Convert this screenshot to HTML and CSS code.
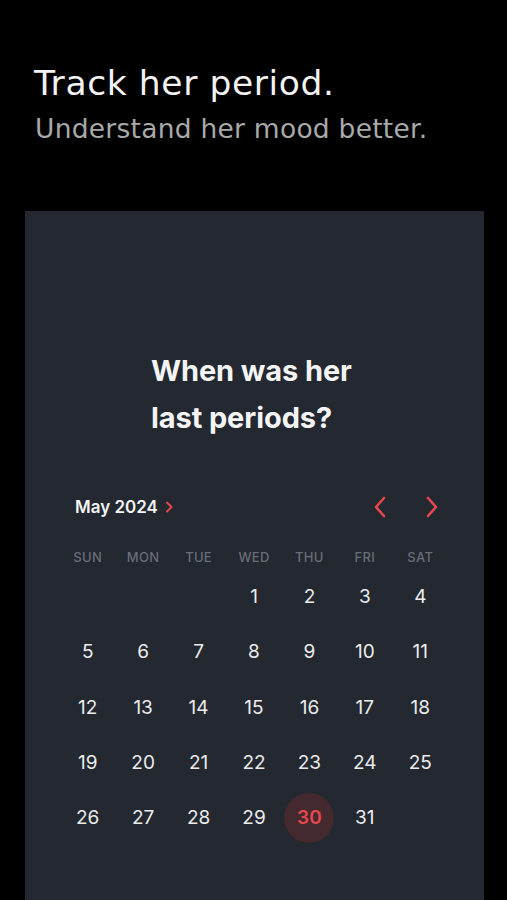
FILE: index.html
```html
<!DOCTYPE html>
<html>
<head>
<meta charset="utf-8">
<link rel="stylesheet" href="styles.css">
</head>
<body>
<header class="intro">
  <h1 class="title">Track her period.</h1>
  <p class="subtitle">Understand her mood better.</p>
</header>
<main class="panel">
  <h2 class="question">When was her<br>last periods?</h2>
  <section class="calendar">
    <div class="month-row">
      <div class="month">May 2024
        <svg class="month-chev" width="9" height="12" viewBox="0 0 9 12"><path d="M2 1.5 L6.5 6 L2 10.5" fill="none" stroke="#e5484d" stroke-width="2" stroke-linecap="round" stroke-linejoin="round"/></svg>
      </div>
      <div class="nav">
        <svg class="nav-btn" width="14" height="22" viewBox="0 0 14 22"><path d="M11 2 L3 11 L11 20" fill="none" stroke="#e5484d" stroke-width="2.6" stroke-linecap="round" stroke-linejoin="round"/></svg>
        <svg class="nav-btn" width="14" height="22" viewBox="0 0 14 22"><path d="M3 2 L11 11 L3 20" fill="none" stroke="#e5484d" stroke-width="2.6" stroke-linecap="round" stroke-linejoin="round"/></svg>
      </div>
    </div>
    <div class="weekdays">
      <span>SUN</span><span>MON</span><span>TUE</span><span>WED</span><span>THU</span><span>FRI</span><span>SAT</span>
    </div>
    <div class="days">
      <span></span><span></span><span></span>
      <span>1</span><span>2</span><span>3</span><span>4</span>
      <span>5</span><span>6</span><span>7</span><span>8</span><span>9</span><span>10</span><span>11</span>
      <span>12</span><span>13</span><span>14</span><span>15</span><span>16</span><span>17</span><span>18</span>
      <span>19</span><span>20</span><span>21</span><span>22</span><span>23</span><span>24</span><span>25</span>
      <span>26</span><span>27</span><span>28</span><span>29</span><span class="selected"><b>30</b></span><span>31</span><span></span>
    </div>
  </section>
</main>
</body>
</html>
```

FILE: styles.css
```css
html, body {
  margin: 0;
  padding: 0;
  background: #000;
  height: 900px;
  overflow: hidden;
}
.intro {
  padding: 63px 0 0 34px;
  height: 211px;
  box-sizing: border-box;
  font-family: "DejaVu Sans", sans-serif;
}
.title {
  margin: 0;
  font-size: 34.5px;
  font-weight: 400;
  line-height: 40px;
  color: #f2f2f2;
  letter-spacing: 0.6px;
}
.subtitle {
  margin: 8px 0 0 1px;
  font-size: 26.5px;
  line-height: 36px;
  color: #a9a9a9;
  letter-spacing: 0.25px;
}
.panel {
  margin: 0 23px 0 25px;
  height: 689px;
  background: #232831;
  padding-top: 136px;
  box-sizing: border-box;
  font-family: Inter, "Liberation Sans", sans-serif;
}
.question {
  margin: 0 0 0 126px;
  font-size: 29px;
  line-height: 47px;
  font-weight: 700;
  color: #f4f4f4;
  letter-spacing: -0.1px;
}
.calendar {
  margin: 51px 0 0 35px;
  width: 388px;
}
.month-row {
  display: flex;
  align-items: center;
  justify-content: space-between;
  height: 30px;
}
.month {
  display: flex;
  align-items: center;
  gap: 7px;
  padding-left: 15px;
  font-size: 17px;
  font-weight: 600;
  color: #f4f4f4;
}
.nav {
  display: flex;
  gap: 38px;
  padding-right: 9px;
}
.nav-btn {
  display: block;
}
.weekdays {
  margin-top: 25px;
  display: grid;
  grid-template-columns: repeat(7, 1fr);
  height: 20px;
  align-items: center;
}
.weekdays span {
  text-align: center;
  font-size: 13px;
  font-weight: 500;
  color: #686e78;
  letter-spacing: 0.3px;
}
.days {
  margin-top: 2px;
  display: grid;
  grid-template-columns: repeat(7, 1fr);
  grid-auto-rows: 55.3px;
}
.days span {
  display: flex;
  align-items: center;
  justify-content: center;
  font-size: 19px;
  color: #ececec;
}
.days .selected b {
  display: flex;
  align-items: center;
  justify-content: center;
  width: 50px;
  height: 50px;
  border-radius: 50%;
  background: #44292e;
  color: #e5484d;
  font-weight: 600;
}
```
